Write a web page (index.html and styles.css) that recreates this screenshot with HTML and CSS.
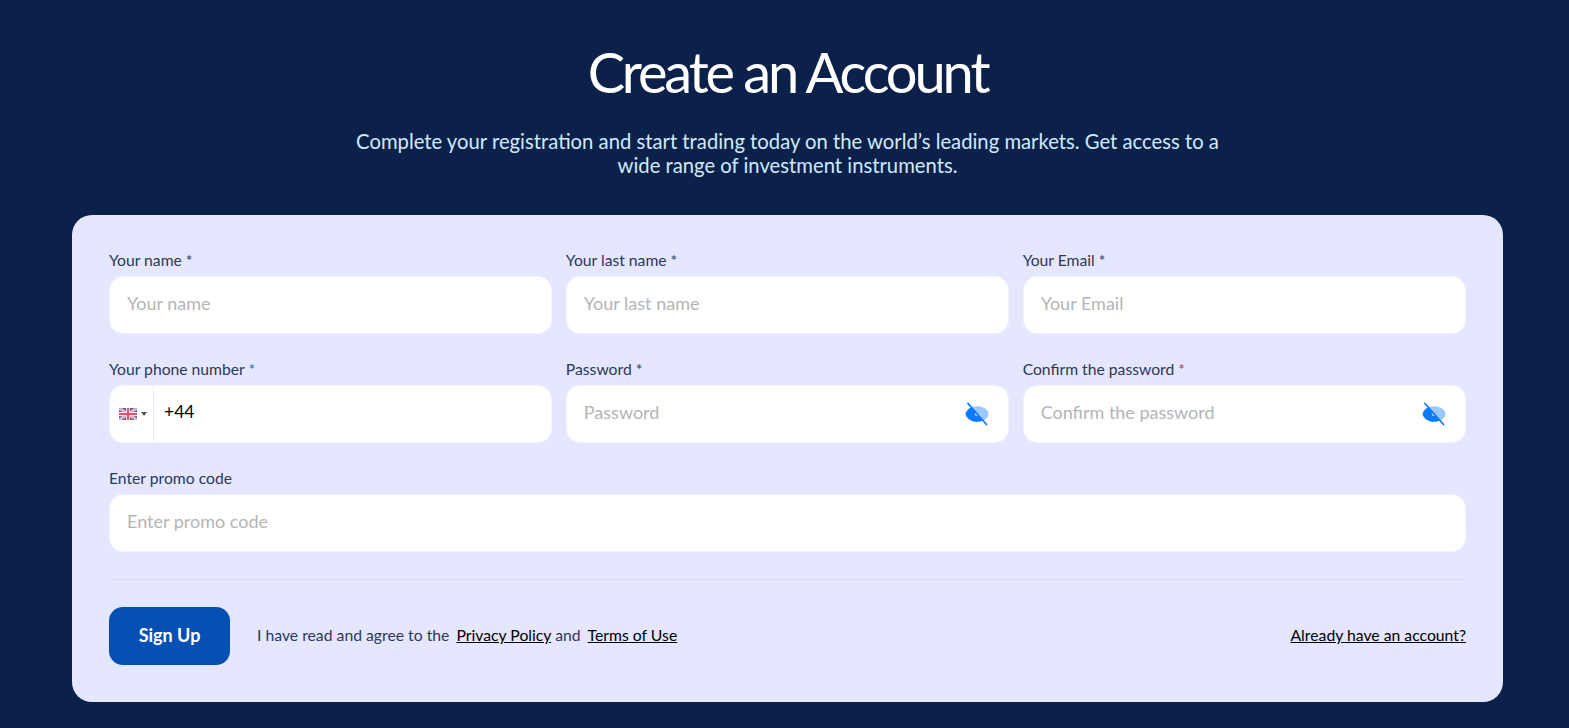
FILE: index.html
```html
<!DOCTYPE html>
<html lang="en">
<head>
<meta charset="utf-8">
<title>Create an Account</title>
<link rel="stylesheet" href="styles.css">
</head>
<body>
<svg class="defs" width="0" height="0" aria-hidden="true">
  <symbol id="eye" viewBox="0 0 24 24">
    <ellipse cx="12" cy="12" rx="11.500" ry="7.800" fill="#9cc7ff"/>
    <path fill="#0a7aff" d="M6.200 5.200C3.400 6.800 1.400 9.500.5 12c1.600 4.400 6 7.800 11.500 7.800 2 0 3.800-.4 5.400-1.200z"/>
    <circle cx="12" cy="12" r="2.300" fill="#9cc7ff"/>
    <path stroke="#0a7aff" stroke-width="1.800" stroke-linecap="round" d="M3 1.500l18.500 21"/>
  </symbol>
</svg>
<main class="page">
  <h1 class="title">Create an Account</h1>
  <p class="subtitle">Complete your registration and start trading today on the world’s leading markets. Get access to a wide range of investment instruments.</p>
  <form class="card">
    <div class="grid">
      <label class="field"><span class="label">Your name *</span><span class="box"><input class="input" placeholder="Your name"></span></label>
      <label class="field"><span class="label">Your last name *</span><span class="box"><input class="input" placeholder="Your last name"></span></label>
      <label class="field"><span class="label">Your Email *</span><span class="box"><input class="input" placeholder="Your Email"></span></label>
      <label class="field"><span class="label">Your phone number <span class="req-blue">*</span></span>
        <span class="box">
          <span class="country">
            <svg class="flag" viewBox="0 0 18 12" aria-hidden="true">
              <rect width="18" height="12" fill="#5d68a8"/>
              <path stroke="#f4eef4" stroke-width="2.400" d="M0 0l18 12M18 0L0 12"/>
              <path stroke="#ec7d8a" stroke-width="1" d="M0 0l18 12M18 0L0 12"/>
              <path stroke="#f4eef4" stroke-width="4" d="M9 0v12M0 6h18"/>
              <path stroke="#ef4f62" stroke-width="2.200" d="M9 0v12M0 6h18"/>
            </svg>
            <span class="caret"></span>
          </span>
          <input class="input phone" value="+44">
        </span>
      </label>
      <label class="field"><span class="label">Password *</span><span class="box"><input class="input" type="password" placeholder="Password"><svg class="eye" aria-hidden="true"><use href="#eye"/></svg></span></label>
      <label class="field"><span class="label">Confirm the password <span class="req-red">*</span></span><span class="box"><input class="input" type="password" placeholder="Confirm the password"><svg class="eye" aria-hidden="true"><use href="#eye"/></svg></span></label>
      <label class="field wide"><span class="label">Enter promo code</span><span class="box"><input class="input" placeholder="Enter promo code"></span></label>
    </div>
    <hr class="divider">
    <div class="footer">
      <button class="submit" type="button">Sign Up</button>
      <p class="agree">I have read and agree to the <a href="#" class="link first">Privacy Policy</a> and <a href="#" class="link first">Terms of Use</a></p>
      <a href="#" class="link login">Already have an account?</a>
    </div>
  </form>
</main>
</body>
</html>
```
FILE: styles.css
```css
* { box-sizing: border-box; }
html, body { height: 100%; }
body {
  margin: 0;
  background: #0c2149;
  font-family: Lato, "Liberation Sans", sans-serif;
  overflow: hidden;
}
.defs { position: absolute; }
.page {
  display: flex;
  flex-direction: column;
  align-items: center;
  padding: 38px 66px 0 72px;
}
.title {
  margin: 0;
  color: #fff;
  font-size: 56px;
  line-height: 68px;
  font-weight: 400;
  letter-spacing: -3.100px;
}
.subtitle {
  margin: 23px 0 0;
  width: 880px;
  color: #cfeaff;
  font-size: 20.250px;
  line-height: 24px;
  text-align: center;
}
.card {
  margin-top: 38px;
  width: 100%;
  height: 487px;
  padding: 34px 37px 0;
  background: #e4e7ff;
  border-radius: 20px;
}
.grid {
  display: grid;
  grid-template-columns: repeat(3, 1fr);
  column-gap: 13.500px;
  row-gap: 24px;
}
.field { display: flex; flex-direction: column; }
.wide { grid-column: 1 / -1; }
.label {
  color: #2b3858;
  font-size: 15.700px;
  line-height: 22px;
  margin-bottom: 5px;
}
.req-blue { color: #1f6fc0; }
.req-red { color: #b3434f; }
.box {
  display: flex;
  align-items: center;
  height: 58px;
  background: #fff;
  border: 1px solid #f3f4ff;
  border-radius: 14px;
  overflow: hidden;
}
.input {
  flex: 1;
  min-width: 0;
  height: 100%;
  padding: 0 17px 5px;
  border: 0;
  outline: 0;
  background: transparent;
  font-family: inherit;
  font-size: 18px;
  color: #000;
}
.input::placeholder { color: #b5b5b5; opacity: 1; }
.phone { padding-left: 10px; font-size: 17.500px; }
.country {
  display: flex;
  align-items: center;
  gap: 4px;
  width: 44px;
  height: 100%;
  padding-left: 9px;
  border-right: 1px solid #eceeff;
}
.flag { width: 18px; height: 12px; }
.caret {
  width: 0;
  height: 0;
  border-left: 3px solid transparent;
  border-right: 3px solid transparent;
  border-top: 4px solid #555;
}
.eye { width: 24px; height: 24px; margin-right: 19px; flex: none; }
.divider {
  margin: 27px 0 0;
  height: 1px;
  border: 0;
  background: #dcdcf8;
}
.footer {
  display: flex;
  align-items: center;
  margin-top: 27px;
}
.submit {
  width: 121px;
  height: 58px;
  padding: 0 0 2px;
  border: 0;
  border-radius: 14px;
  background: #0650b3;
  color: #fff;
  font-family: inherit;
  font-size: 18px;
  font-weight: 700;
}
.agree {
  margin: 0 0 3px 27px;
  color: #2c3757;
  font-size: 15.750px;
}
.link { color: #000; text-decoration: underline; font-size: 15.750px; }
.first { margin-left: 3px; }
.login { margin: 0 0 3px auto; }
```
